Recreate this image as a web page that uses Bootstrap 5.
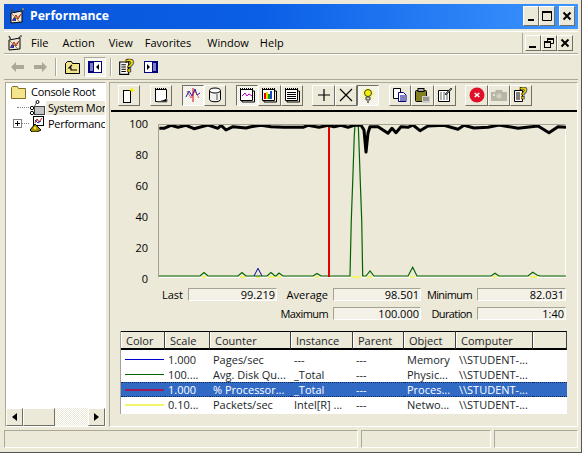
<!DOCTYPE html>
<html lang="en">
<head>
  <meta charset="UTF-8" />
  <title>Performance</title>
  <link href="https://cdn.jsdelivr.net/npm/bootstrap@5.3.0/dist/css/bootstrap.min.css" rel="stylesheet" />
  <style>
    html, body { height: 100%; }
    body { margin: 0; background: #ece9d8; color: #000; font: 11px/14px "Open Sans", "Noto Sans", sans-serif; overflow: hidden; }
    svg { display: block; flex: none; }
    .win { width: 582px; height: 453px; padding: 4px 3px 4px 4px; border-right: 1px solid #555; border-bottom: 1px solid #555; }

    .titlebar { height: 25px; padding: 0 3px 0 5px; background: linear-gradient(90deg, #0a55d8 0%, #0a5fe6 45%, #3d95ff 100%); color: #fff; font-weight: 700; font-size: 12.2px; }
    .titlebar .ttl { margin-left: 5px; }
    .capbtn { width: 16px; height: 20px; background: #ece9d8; border: 1px solid; border-color: #fff #716f64 #716f64 #fff; }
    .capbtn.mini { height: 16px; }

    .menubar { height: 23px; margin-top: 2px; padding: 1px 5px 0 3px; border-top: 1px solid #fff; border-bottom: 1px solid #aca899; }
    .mi1 { margin-left: 8px; } .mi2 { margin-left: 14px; } .mi3 { margin-left: 14px; } .mi4 { margin-left: 12px; } .mi5 { margin-left: 16px; } .mi6 { margin-left: 11px; }
    .mdibtns { padding-left: 2px; height: 100%; border-left: 1px solid #aca899; }

    .mmc-tools { height: 26px; padding-left: 7px; border-top: 1px solid #fff; border-bottom: 1px solid #aca899; }
    .sepv { width: 2px; height: 18px; background: #aca899; border-right: 1px solid #fff; }
    .flat { width: 22px; height: 20px; margin-left: 3px; }
    .flat.down { background: #f7f6ef; border: 1px solid; border-color: #aca899 #fff #fff #aca899; }
    .tool-help { margin-left: 6px; }

    .mainrow { height: 346px; margin-top: 2px; }
    .tree { width: 101px; margin-left: 1px; background: #fff; border: 1px solid; border-color: #aca899 #fff #fff #aca899; }
    .treerows { padding-top: 1px; overflow: hidden; }
    .treeline { height: 16px; white-space: nowrap; letter-spacing: -.3px; }
    .treeline .lbl { padding: 0 1px; margin-left: 2px; }
    .treeline .root-lbl { margin-left: 3px; }
    .treeline .on { background: #ece9d8; flex: 1; margin-left: 1px; padding-left: 2px; }
    .root-ico { margin-left: 5px; }
    .expander { width: 9px; height: 9px; border: 1px solid #808080; background: #fff; position: relative; margin-left: 7px; flex: none; }
    .expander::before { content: ""; position: absolute; left: 1px; top: 3px; width: 5px; height: 1px; background: #000; }
    .expander::after { content: ""; position: absolute; left: 3px; top: 1px; width: 1px; height: 5px; background: #000; }
    .dots { border-top: 1px dotted #808080; flex: none; }
    .dots-leaf { width: 12px; margin-left: 11px; }
    .dots-node { width: 7px; }
    .scr { height: 18px; background: repeating-conic-gradient(#ece9d8 0 25%, #fff 0 50%) 0 0 / 2px 2px; }
    .scrb { background: #ece9d8; border: 1px solid; border-color: #fff #716f64 #716f64 #fff; height: 18px; }
    .scrb.arr { width: 17px; }
    .scrb.thumb { width: 32px; }

    .sysmon { margin-left: 3px; width: 469px; padding-left: 1px; border: 1px solid; border-color: #aca899 #fff #fff #aca899; }
    .gtools { height: 29px; padding: 2px 0 0 7px; gap: 9.6px; border-bottom: 2px solid #000; }
    .gbtn { width: 22.3px; height: 21px; background: #ece9d8; border: 1px solid; border-color: #fff #716f64 #716f64 #fff; }
    .gbtn.down { background: repeating-conic-gradient(#ece9d8 0 25%, #fff 0 50%) 0 0 / 2px 2px; border-color: #716f64 #fff #fff #716f64; }

    .graphrow { padding-top: 5px; height: 176px; }
    .yaxis { width: 37px; margin-right: 10px; height: 169px; text-align: right; }
    .plot { margin-top: 7px; width: 408px; height: 154px; border: 1px solid; border-color: #a5a394 #fff #fff #a5a394; }

    .stats { display: grid; grid-template-columns: 77px 89px 56px 88px 56px 89px; row-gap: 6px; }
    .stats .cap { text-align: right; padding-right: 5px; line-height: 13px; }
    .stats .cap.tight { letter-spacing: -.6px; }
    .stats .val { height: 13px; line-height: 12px; text-align: right; padding-right: 1px; background: #f4f2e8; border: 1px solid; border-color: #a5a394 #fff #fff #a5a394; }

    .legendbox { width: 447px; margin: 11px 0 0 9px; height: 83px; border-left: 1px solid #a5a394; }
    .legend { table-layout: fixed; width: 446px; margin: 0; border-collapse: separate; border-spacing: 0; }
    .legend th { height: 19px; padding: 0 0 0 5px; font-weight: 400; background: #ece9d8; border: 0; border-top: 1px solid #000; border-bottom: 2px solid #000; border-right: 1px solid #404040; box-shadow: inset 1px 0 0 #fff; }
    .legend td { height: 15px; padding: 1px 0 0 3px; border: 0; background: #fff; white-space: nowrap; overflow: hidden; line-height: 14px; vertical-align: middle; }
    .legend tbody tr:first-child td { height: 17px; padding-top: 3px; }
    .legend tbody tr:last-child td { height: 17px; padding-top: 1px; padding-bottom: 2px; }
    .legend tr.sel td { background: #316ac5; color: #fff; line-height: 12px; border-top: 1px dotted #0c2a5a; border-bottom: 1px dotted #0c2a5a; }
    .c-color { width: 44px; } .c-scale { width: 45px; } .c-counter { width: 81px; } .c-inst { width: 62px; } .c-parent { width: 51px; } .c-obj { width: 52px; } .c-comp { width: 77px; }
    .swatch { height: 1px; width: 39px; margin-left: 1px; }
    .sw-blue { background: #0000d0; }
    .sw-green { background: #006400; }
    .sw-red { background: #a01b55; height: 2px; }
    .sw-yellow { background: #f4f46a; height: 2px; }

    .statusrow { height: 18px; margin-top: 3px; gap: 3px; }
    .statusrow > div { border: 1px solid; border-color: #aca899 #fff #fff #aca899; }
    .st1 { width: 354px; } .st2 { width: 130px; } .st3 { width: 84px; }
  </style>
</head>
<body>
  <svg width="0" height="0" class="position-absolute">
    <symbol id="app" viewBox="0 0 16 16">
      <path d="M2 5 13 3v11L2 15z" fill="#ece9d8" stroke="#000"/>
      <path d="M3 13 7 7l2 4 3-5" fill="none" stroke="#c01010"/>
      <path d="M3 6l8 8M11 7l-7 6" stroke="#a08020"/>
      <path d="M11 4l3-3M4 5 2 1" stroke="#404040" stroke-width="1.5"/>
      <rect x="13" y="0" width="2" height="2" fill="#808080"/>
      <rect x="4" y="10" width="3" height="3" fill="#2040b0"/>
    </symbol>
    <symbol id="help" viewBox="0 0 16 16">
      <path d="M1.500 3.500h8v11h-8z" fill="#fff" stroke="#000"/>
      <path d="M3 6h4M3 8h4M3 10h4M3 12h4" stroke="#000"/>
      <text x="6" y="12" font-family="DejaVu Sans" font-weight="700" font-size="15" fill="#f4d800" stroke="#000" stroke-width=".6">?</text>
    </symbol>
  </svg>

  <div class="win d-flex flex-column">
    <div class="titlebar d-flex align-items-center">
      <svg width="16" height="16"><use href="#app"/></svg>
      <span class="ttl flex-grow-1">Performance</span>
      <button type="button" aria-label="Minimize" class="capbtn p-0 d-flex"><svg width="14" height="18"><rect x="4" y="12" width="6" height="2"/></svg></button>
      <button type="button" aria-label="Maximize" class="capbtn p-0 d-flex"><svg width="14" height="18"><path d="M2.500 5.500h9v8h-9z" fill="none" stroke="#000"/><rect x="2" y="4" width="10" height="2"/></svg></button>
      <button type="button" aria-label="Close" class="capbtn p-0 d-flex ms-1"><svg width="14" height="18"><path d="M3.500 5.500l7 7M10.500 5.500l-7 7" stroke="#000" stroke-width="2"/></svg></button>
    </div>

    <div class="menubar d-flex align-items-center">
      <svg width="16" height="16"><use href="#app"/></svg>
      <span class="mi1">File</span><span class="mi2">Action</span><span class="mi3">View</span><span class="mi4">Favorites</span><span class="mi5">Window</span><span class="mi6">Help</span>
      <div class="ms-auto mdibtns d-flex align-items-center">
        <button type="button" aria-label="Minimize" class="capbtn mini p-0 d-flex"><svg width="14" height="14"><rect x="3" y="10" width="7" height="2"/></svg></button>
        <button type="button" aria-label="Restore" class="capbtn mini p-0 d-flex"><svg width="14" height="14"><path d="M5.500 2.500h6v5h-6z" fill="none" stroke="#000"/><rect x="2.500" y="5.500" width="6" height="6" fill="#ece9d8" stroke="#000"/><rect x="5" y="2" width="7" height="2"/><rect x="2" y="5" width="7" height="2"/></svg></button>
        <button type="button" aria-label="Close" class="capbtn mini p-0 d-flex"><svg width="14" height="14"><path d="M3.500 3.500l7 7M10.500 3.500l-7 7" stroke="#000" stroke-width="2"/></svg></button>
      </div>
    </div>

    <div class="mmc-tools d-flex align-items-center">
      <svg width="14" height="12"><path d="M0 6l5-5v3h8v4H5v3z" fill="#aca899"/></svg>
      <svg width="14" height="12" class="ms-2"><path d="M14 6 9 1v3H1v4h8v3z" fill="#aca899"/></svg>
      <div class="sepv ms-2"></div>
      <svg width="16" height="15" class="ms-2"><path d="M.5 14.500v-10l2-2h4l1 2h7v10z" fill="#f4e48c" stroke="#000"/><path d="M7 6 4 9h2v2h6" fill="none" stroke="#000" stroke-width="1.200"/></svg>
      <div class="flat down d-flex align-items-center justify-content-center"><svg width="14" height="12"><rect x=".5" y=".5" width="13" height="11" fill="#fff" stroke="#000080"/><rect x="1" y="1" width="5" height="10" fill="#000080"/><path d="M2 3h3M2 5h3M2 7h3M2 9h3" stroke="#fff"/><path d="M11 3 8 6l3 3z" fill="#000"/></svg></div>
      <div class="sepv ms-1"></div>
      <svg width="18" height="18" class="tool-help"><use href="#help"/></svg>
      <svg width="14" height="12" class="ms-2"><rect x=".5" y=".5" width="13" height="11" fill="#fff" stroke="#000080"/><rect x="8" y="1" width="5" height="10" fill="#000080"/><path d="M9 3h3M9 5h3M9 7h3M9 9h3" stroke="#fff"/><path d="M3 3l3 3-3 3z" fill="#000"/></svg>
    </div>

    <div class="mainrow d-flex">
      <div class="tree d-flex flex-column">
        <div class="treerows flex-grow-1">
          <div class="treeline d-flex align-items-center">
            <svg width="16" height="14" class="root-ico"><path d="M.5 13.500v-11l1-1h5l1 2h7v10z" fill="#f4e48c" stroke="#807020"/></svg>
            <span class="lbl root-lbl">Console Root</span>
          </div>
          <div class="treeline d-flex align-items-center">
            <span class="dots dots-leaf"></span>
            <svg width="16" height="16"><path d="M5 7l3-5" stroke="#606060"/><circle cx="8.500" cy="2" r="1.500" fill="#fff" stroke="#000"/><rect x="5.500" y="6.500" width="10" height="8" fill="#c4c4c4" stroke="#404040"/><circle cx="3" cy="8" r="1.700" fill="#fff" stroke="#000"/><circle cx="3" cy="13" r="1.700" fill="#fff" stroke="#000"/></svg>
            <span class="lbl on">System Monitor</span>
          </div>
          <div class="treeline d-flex align-items-center">
            <span class="expander"></span>
            <span class="dots dots-node"></span>
            <svg width="16" height="16"><rect x="4.500" y=".5" width="10" height="9" fill="#fff" stroke="#000"/><path d="M6 7l2-4 2 3 3-4" fill="none" stroke="#c01010"/><path d="M6 4l3 3 3-2" fill="none" stroke="#2040c0"/><path d="M1 14l5-6 6 6-4 2H3z" fill="#a09000" stroke="#000"/><circle cx="6" cy="12" r="1.500" fill="#f4e030"/></svg>
            <span class="lbl">Performance Logs and Alerts</span>
          </div>
        </div>
        <div class="scr d-flex justify-content-between">
          <div class="d-flex">
            <div class="scrb arr d-flex align-items-center justify-content-center"><svg width="5" height="8"><path d="M5 0 0 4l5 4z"/></svg></div>
            <div class="scrb thumb"></div>
          </div>
          <div class="scrb arr d-flex align-items-center justify-content-center"><svg width="5" height="8"><path d="M0 0l5 4-5 4z"/></svg></div>
        </div>
      </div>

      <div class="sysmon">
        <div class="gtools d-flex">
          <div class="d-flex"><div class="gbtn d-flex align-items-center justify-content-center"><svg width="14" height="16"><rect x="1.500" y="3.500" width="7" height="12" fill="#fff" stroke="#000"/><path d="M10 0l1 2 2 1-2 1-1 2-1-2-2-1 2-1z" fill="#f4f000"/></svg></div></div>
          <div class="d-flex"><div class="gbtn d-flex align-items-center justify-content-center"><svg width="16" height="16"><path d="M2.500 2.500h11v9l-3 3h-8z" fill="#fff" stroke="#000"/><path d="M2 2h12" stroke="#000" stroke-dasharray="1 1" stroke-width="2"/><path d="M14 12v3H4" stroke="#808080"/></svg></div></div>
          <div class="d-flex">
            <div class="gbtn down d-flex align-items-center justify-content-center"><svg width="16" height="16"><path d="M8 1v14" stroke="#e00000"/><path d="M1 10l3-6 3 5 3-7 2 6 3-2" fill="none" stroke="#1020b0"/><path d="M2 4l4 7 4-7 4 7" fill="none" stroke="#d02040" stroke-width=".7"/></svg></div>
            <div class="gbtn d-flex align-items-center justify-content-center"><svg width="14" height="16"><path d="M1.500 3.500v9c0 3 11 3 11 0v-9" fill="#f0f0f0" stroke="#000"/><ellipse cx="7" cy="3.500" rx="5.500" ry="2.500" fill="#fff" stroke="#000"/><path d="M9 7v6" stroke="#a0a0a0" stroke-width="2"/></svg></div>
          </div>
          <div class="d-flex">
            <div class="gbtn down d-flex align-items-center justify-content-center"><svg width="16" height="16"><path d="M1.500 2.500h12v11h-12z" fill="#fff" stroke="#000"/><path d="M1 2h13" stroke="#000" stroke-dasharray="1 1" stroke-width="2"/><path d="M3 9l3-3 2 3 2-2 3 2" fill="none" stroke="#c000c0"/><path d="M14 4h1.500v11H3v-1" fill="none" stroke="#000"/></svg></div>
            <div class="gbtn d-flex align-items-center justify-content-center"><svg width="16" height="16"><path d="M1.500 2.500h12v11h-12z" fill="#fff" stroke="#000"/><path d="M1 2h13" stroke="#000" stroke-dasharray="1 1" stroke-width="2"/><rect x="3" y="6" width="2" height="6" fill="#e00000"/><rect x="5" y="5" width="2" height="7" fill="#f0d000"/><rect x="7" y="7" width="2" height="5" fill="#00a000"/><rect x="9" y="4" width="2" height="8" fill="#2040d0"/><path d="M14 4h1.500v11H3v-1" fill="none" stroke="#000"/></svg></div>
            <div class="gbtn d-flex align-items-center justify-content-center"><svg width="16" height="16"><path d="M1.500 2.500h12v11h-12z" fill="#fff" stroke="#000"/><path d="M1 2h13" stroke="#000" stroke-dasharray="1 1" stroke-width="2"/><path d="M3 5.500h9M3 7.500h9M3 9.500h9M3 11.500h9" stroke="#000"/><path d="M14 4h1.500v11H3v-1" fill="none" stroke="#000"/></svg></div>
          </div>
          <div class="d-flex">
            <div class="gbtn d-flex align-items-center justify-content-center"><svg width="14" height="14"><path d="M7 1v12M1 7h12" stroke="#000" stroke-width="1.200"/></svg></div>
            <div class="gbtn d-flex align-items-center justify-content-center"><svg width="16" height="16"><path d="M2 2l12 12M14 2 2 14" stroke="#000" stroke-width="1.200"/></svg></div>
            <div class="gbtn down d-flex align-items-center justify-content-center"><svg width="14" height="16"><circle cx="7" cy="7" r="6.500" fill="#f8f8a8"/><circle cx="7" cy="6" r="3.500" fill="#f4f000" stroke="#404040"/><path d="M5 10h4v3H5z" fill="#d0d0d0" stroke="#404040"/><path d="M6 15h2" stroke="#000"/></svg></div>
          </div>
          <div class="d-flex">
            <div class="gbtn d-flex align-items-center justify-content-center"><svg width="16" height="16"><path d="M1.500 1.500h7v10h-7z" fill="#fff" stroke="#000"/><path d="M6.500 5.500h5l2.500 2.500v6.500H6.500z" fill="#fff" stroke="#000080"/><path d="M8 9h5M8 11h5M8 13h5" stroke="#000080"/></svg></div>
            <div class="gbtn d-flex align-items-center justify-content-center"><svg width="16" height="16"><rect x="1.500" y="3.500" width="11" height="11" rx="1" fill="#808020" stroke="#000"/><rect x="4" y="1.500" width="6" height="3" fill="#b0b0a0" stroke="#000"/><rect x="8" y="9" width="8" height="7" fill="#d0d0c8"/><path d="M9 11h6M9 13h6" stroke="#606060"/></svg></div>
            <div class="gbtn d-flex align-items-center justify-content-center"><svg width="16" height="16"><path d="M1.500 3.500h11v11h-11z" fill="#fff" stroke="#000"/><path d="M3 6h8M3 8h8M3 10h8M3 12h8" stroke="#606060" stroke-dasharray="2 1"/><path d="M8 7l6-6 1 1-6 6z" fill="#808080" stroke="#000" stroke-width=".6"/></svg></div>
          </div>
          <div class="d-flex">
            <div class="gbtn d-flex align-items-center justify-content-center"><svg width="16" height="16"><circle cx="8" cy="8" r="7.500" fill="#e0102a"/><path d="M5.700 6 10.300 10M10.300 6 5.700 10" stroke="#fff" stroke-width="1.600"/></svg></div>
            <div class="gbtn d-flex align-items-center justify-content-center"><svg width="16" height="12"><path d="M0 3h4l1-2h6l1 2h4v9H0z" fill="#b8b6a8"/><circle cx="8" cy="7" r="2.500" fill="#d4d2c4"/><rect x="2" y="5" width="2" height="2" fill="#e4e2d8"/></svg></div>
            <div class="gbtn d-flex align-items-center justify-content-center"><svg width="16" height="16"><use href="#help"/></svg></div>
          </div>
        </div>

        <div class="graphrow d-flex">
          <div class="yaxis d-flex flex-column justify-content-between"><span>100</span><span>80</span><span>60</span><span>40</span><span>20</span><span>0</span></div>
          <div class="plot">
            <svg width="407" height="153" viewBox="1 1 407 153">
              <path fill="none" stroke="#f4f46a" stroke-width="2" d="M44 153h4M82 153h5M98 153h4M111 153h6M119 153h4M157 153h4M193 153h10M209 153h5M252 153h5M335 153h4M372 153h7"/>
              <polyline fill="none" stroke="#0000a0" points="96,152 100,144.300 104,152"/>
              <polyline fill="none" stroke="#006400" stroke-width="1.200" points="0,152 42,152 46,148.500 50,152 80,152 84,148.500 88,152 109,152 113,148.500 117,152 118,152 121,149 125,152 155,152 159,149.500 163,152 192,152 193.300,96 194.700,58 196.300,11 197,1.300 200.300,1.300 201.300,29 202.300,58 203.700,96 204.700,152 208,152 212,147 216,152 250,152 254.700,143.300 259,152 333,152 337,149.300 341,152 370,152 374.700,148.300 379,151 382,152 408,152"/>
              <line x1="171" y1="0" x2="171" y2="153" stroke="#e60000" stroke-width="2"/>
              <polyline fill="none" stroke="#000" stroke-width="3" stroke-linejoin="round" points="1.300,4.300 6,4.300 13,1.300 20,3.300 28,1.300 36,4.700 50,1 60,4.300 63,1.300 68,6 75,2.700 88,4 93,2.700 103,1.300 113,2.700 126,3.300 145,3.300 150,1.300 161,3.300 170,1.300 176,2.700 183,1.300 190,3.300 196,1.300 203,1.300 206,6 208,28 210,9 212,2.700 220,2.700 230,9.300 234,4.300 238,8.700 243,2.700 250,3.300 255,1 262,6.700 270,2 286,1.300 300,5.300 306,1.300 316,4 330,3.300 341,1 360,4.300 380,2 391,8.700 400,2.700 408,3.300"/>
            </svg>
          </div>
        </div>

        <div class="stats">
          <div class="cap">Last</div><div class="val">99.219</div>
          <div class="cap">Average</div><div class="val">98.501</div>
          <div class="cap tight">Minimum</div><div class="val">82.031</div>
          <div></div><div></div>
          <div class="cap tight">Maximum</div><div class="val">100.000</div>
          <div class="cap tight">Duration</div><div class="val">1:40</div>
        </div>

        <div class="legendbox">
          <table class="legend table">
            <colgroup><col class="c-color"><col class="c-scale"><col class="c-counter"><col class="c-inst"><col class="c-parent"><col class="c-obj"><col class="c-comp"><col></colgroup>
            <thead><tr><th>Color</th><th>Scale</th><th>Counter</th><th>Instance</th><th>Parent</th><th>Object</th><th>Computer</th><th></th></tr></thead>
            <tbody>
              <tr><td><div class="swatch sw-blue"></div></td><td>1.000</td><td>Pages/sec</td><td>---</td><td>---</td><td>Memory</td><td>\\STUDENT-...</td><td></td></tr>
              <tr><td><div class="swatch sw-green"></div></td><td>100....</td><td>Avg. Disk Qu...</td><td>_Total</td><td>---</td><td>Physic...</td><td>\\STUDENT-...</td><td></td></tr>
              <tr class="sel"><td><div class="swatch sw-red"></div></td><td>1.000</td><td>% Processor...</td><td>_Total</td><td>---</td><td>Proces...</td><td>\\STUDENT-...</td><td></td></tr>
              <tr><td><div class="swatch sw-yellow"></div></td><td>0.10...</td><td>Packets/sec</td><td>Intel[R] ...</td><td>---</td><td>Netwo...</td><td>\\STUDENT-...</td><td></td></tr>
            </tbody>
          </table>
        </div>
      </div>
    </div>

    <div class="statusrow d-flex">
      <div class="st1"></div><div class="st2"></div><div class="st3"></div>
    </div>
  </div>
</body>
</html>
